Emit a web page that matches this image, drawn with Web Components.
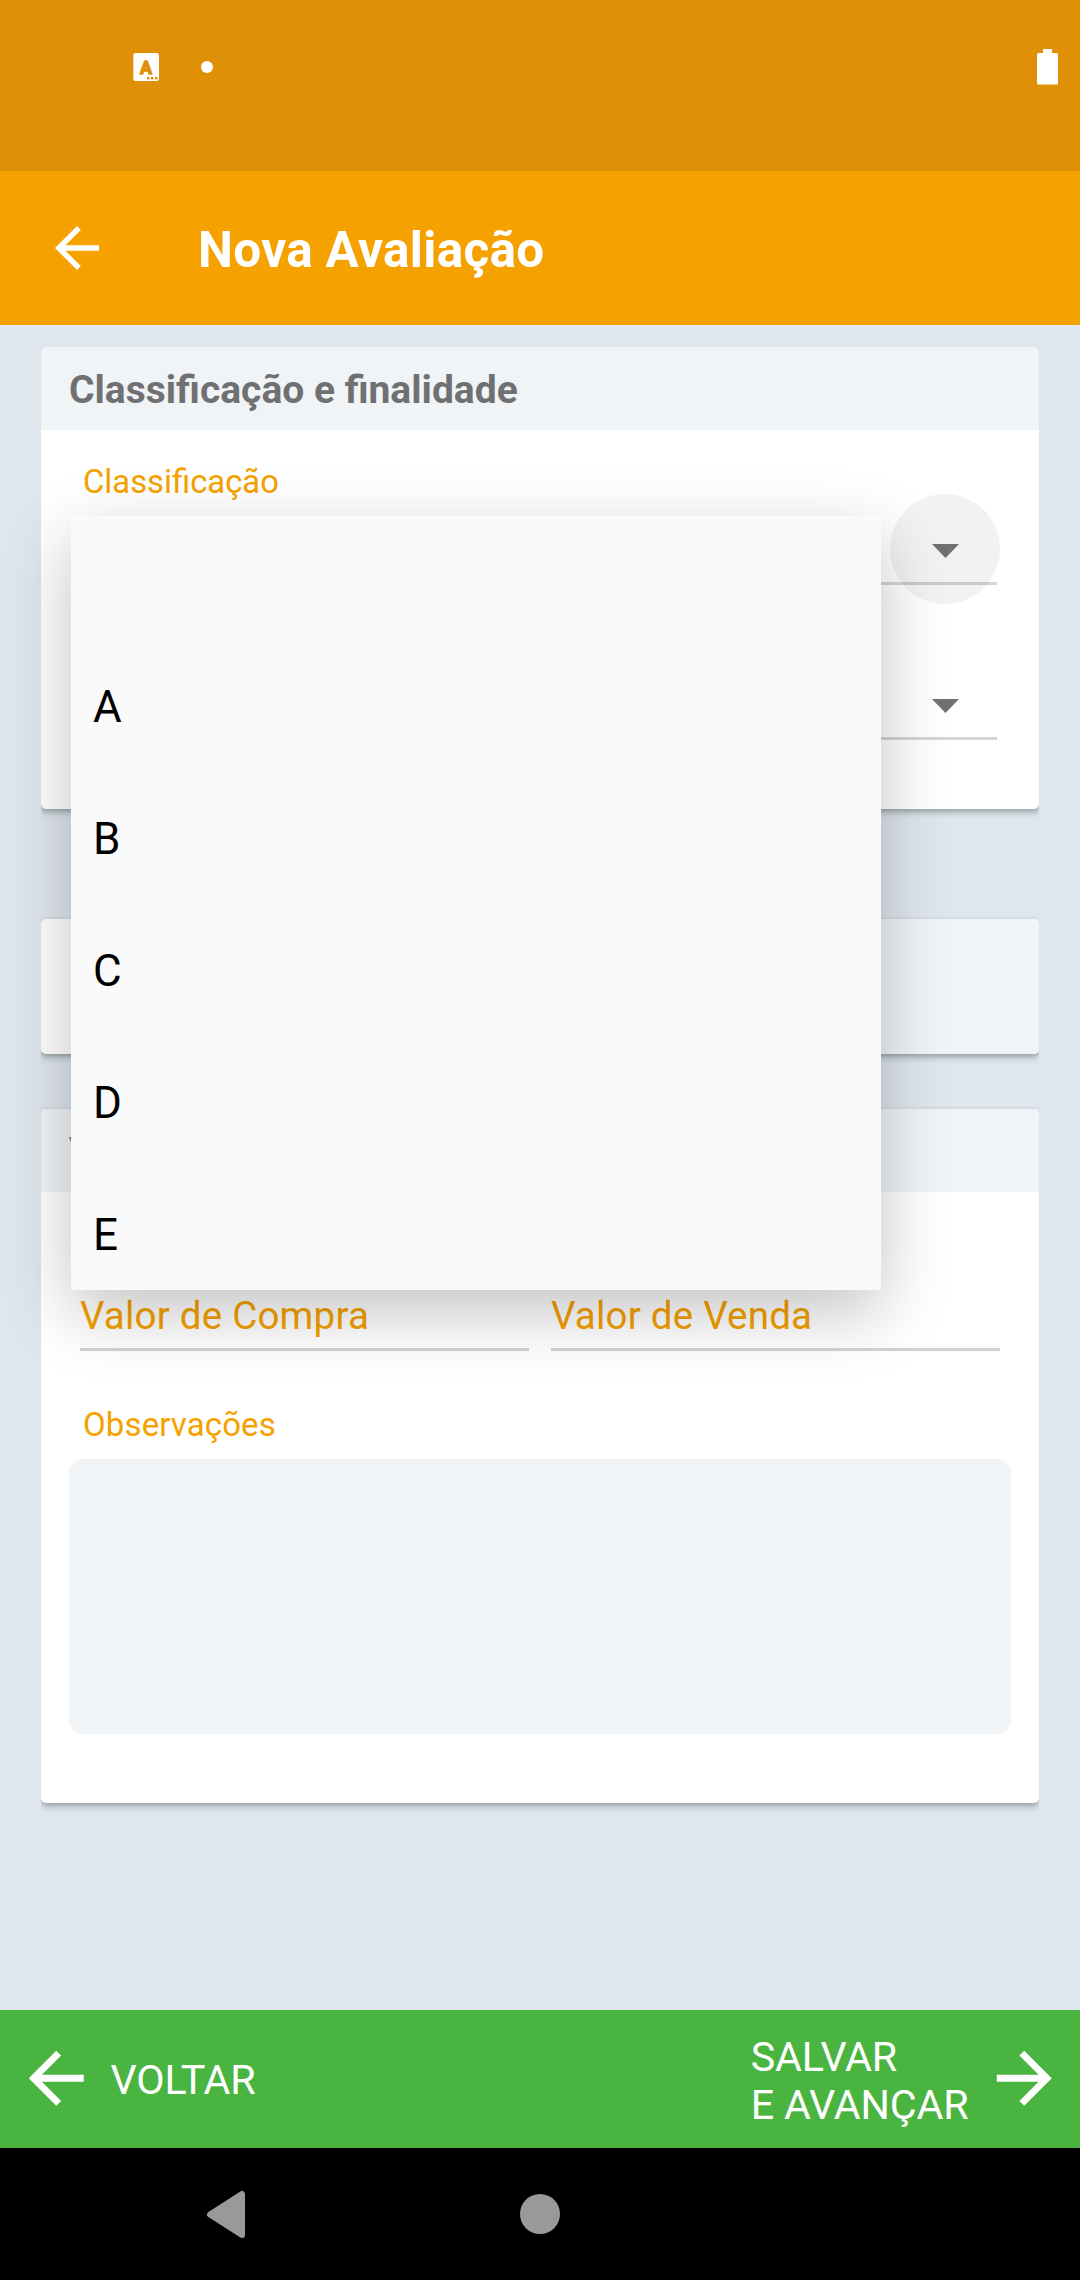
<!DOCTYPE html>
<html lang="pt-BR">
<head>
<meta charset="utf-8">
<title>Nova Avaliação</title>
<style>
html,body{margin:0;padding:0;background:#dfe6ed}
body{width:1080px;height:2280px;overflow:hidden;font-family:Roboto,"Liberation Sans",sans-serif}
</style>
</head>
<body>
<evaluation-screen></evaluation-screen>
<script>
const define = (name, html) => {
  const template = document.createElement('template');
  template.innerHTML = html;
  customElements.define(name, class extends HTMLElement {
    constructor() {
      super();
      this.attachShadow({ mode: 'open' }).append(template.content.cloneNode(true));
    }
  });
};

define('status-bar', `
<style>
:host{display:flex;align-items:flex-start;justify-content:space-between;height:171px;box-sizing:border-box;padding:49px 22px 0 133px;background:#df9007}
.left{display:flex;align-items:center;gap:42px;padding-top:4px}
svg{display:block}
.dot{width:12px;height:12px;border-radius:50%;background:#fff}
</style>
<div class="left">
  <svg width="26" height="28" viewBox="0 0 26 28"><rect x=".3" width="25.700" height="28" rx="2.500" fill="#fff"/>
    <text x="13" y="20.600" text-anchor="middle" textLength="12" lengthAdjust="spacingAndGlyphs" font-family="Roboto,sans-serif" font-size="18.500" font-weight="700" fill="#df9007" stroke="#df9007" stroke-width="1.300" stroke-linejoin="round">A</text>
    <g fill="#df9007"><rect x="14" y="24" width="2.400" height="2.400"/><rect x="18" y="24" width="2.400" height="2.400"/><rect x="22" y="24" width="2.400" height="2.400"/></g></svg>
  <div class="dot"></div>
</div>
<svg width="21" height="36" viewBox="0 0 21 36" fill="#fff"><path d="M6 0h9v4h4.500q1.500 0 1.500 1.500v28.500q0 1.500-1.500 1.500h-18q-1.500 0-1.500-1.500v-28.500q0-1.500 1.500-1.500h4.500z"/></svg>
`);

define('arrow-icon', `
<style>
:host{display:block;width:66px;height:66px;color:#fff}
:host([large]){width:82.5px;height:82.5px}
:host([forward]){transform:scaleX(-1)}
svg{display:block;width:100%;height:100%}
</style>
<svg viewBox="0 0 24 24" fill="currentColor"><path d="M20 11H7.830l5.590-5.590L12 4l-8 8 8 8 1.410-1.410L7.830 13H20v-2z"/></svg>
`);

define('app-bar', `
<style>
:host{display:flex;align-items:center;height:154px;box-sizing:border-box;padding-left:44px;background:#f5a100;color:#fff}
h1{margin:4px 0 0 88px;font-size:49.5px;line-height:60px;font-weight:700;white-space:nowrap;letter-spacing:.32px}
</style>
<arrow-icon></arrow-icon><h1><slot></slot></h1>
`);

define('form-card', `
<style>
:host{display:flex;flex-direction:column;box-sizing:border-box;background:#fff;border-radius:5px;
 box-shadow:0 3px 5px rgba(60,75,75,.34),0 3px 8px rgba(60,75,75,.14);clip-path:inset(-3px 0 -12px 0)}
:host([flat-top]){clip-path:inset(0 0 -12px 0)}
header{display:flex;align-items:center;height:83px;flex:none;box-sizing:border-box;padding:2px 0 0 28px;background:#f0f4f7;border-radius:5px 5px 0 0;
 color:#707072;font-size:39px;font-weight:700}
</style>
<header><slot name="title"></slot></header><slot></slot>
`);

define('plain-card', `
<style>
:host{display:flex;box-sizing:border-box;background:#fff;border-radius:5px;
 box-shadow:0 3px 5px rgba(60,75,75,.34),0 3px 8px rgba(60,75,75,.14);clip-path:inset(-3px 0 -12px 0)}
div{flex:1;margin-left:499px;background:#f0f4f7;border-radius:0 5px 5px 0}
</style><div></div>
`);

define('select-field', `
<style>
:host{display:flex;justify-content:flex-end;height:155px;box-sizing:border-box}
.row{display:flex;justify-content:flex-end;align-items:flex-start;width:913px;height:94px;border-bottom:3px solid #d5d5d5;box-sizing:border-box}
.knob{display:flex;align-items:center;justify-content:center;width:110px;height:110px;flex:none;border-radius:50%;margin:3px -3px 0 0}
:host([pressed]) .knob{background:rgba(0,0,0,.05)}
svg{display:block;margin-top:3px}
</style>
<div class="row"><div class="knob"><svg width="27" height="14" viewBox="0 0 27 14"><path d="M0 0h27L13.500 14z" fill="#717171"/></svg></div></div>
`);

define('field-label', `
<style>
:host{display:block;color:#f5a100;font-size:33px;line-height:40px;white-space:nowrap}
</style><slot></slot>
`);

define('money-field', `
<style>
:host{display:block;flex:1;box-sizing:border-box;height:58px;border-bottom:3px solid #d2d2d2;color:#f5a100;font-size:38.5px;line-height:46px;white-space:nowrap;letter-spacing:.22px}
</style><slot></slot>
`);

define('note-box', `<style>:host{display:block;height:275px;border-radius:14px;background:#f0f4f7}</style>`);

define('option-item', `
<style>:host{display:block;height:132px;flex:none;padding-left:22px;font-size:44px;line-height:132px;color:#000}</style><slot></slot>
`);

define('option-popup', `
<style>
:host{display:block;position:absolute;left:71px;top:516px;width:810px;height:774px;background:#fafafa;box-shadow:0 22px 64px rgba(0,0,0,.24)}
.clip{height:100%;overflow:hidden}
.list{display:flex;flex-direction:column;margin-top:-7px}
</style>
<div class="clip"><div class="list"><slot></slot></div></div>
`);

define('action-bar', `
<style>
:host{display:flex;justify-content:space-between;align-items:center;height:138px;background:#49b43f;color:#fff;font-size:41.25px;line-height:48px;padding:0 15px 0 14.5px}
.side{display:flex;align-items:center}
arrow-icon{margin-top:-1px}
.back{gap:13.5px}.next{gap:14px}
.back span{padding-top:1px;letter-spacing:-.25px}.next span{padding-top:4px;letter-spacing:-.15px}
span{white-space:nowrap}
</style>
<div class="side back"><arrow-icon large></arrow-icon><span>VOLTAR</span></div>
<div class="side next"><span>SALVAR<br>E AVANÇAR</span><arrow-icon large forward></arrow-icon></div>
`);

define('system-nav', `
<style>
:host{display:grid;grid-template-columns:1fr 180px 1fr;align-items:center;justify-items:center;height:132px;background:#000}
svg{display:block}
.tri{margin-left:2px}
</style>
<svg class="tri" width="40" height="48" viewBox="0 0 40 48"><path d="M4 24.500L36 4V45z" fill="#999" stroke="#999" stroke-width="6" stroke-linejoin="round"/></svg>
<svg width="40" height="40" viewBox="0 0 40 40"><circle cx="20" cy="20" r="20" fill="#999"/></svg>
`);

define('evaluation-screen', `
<style>
:host{display:flex;flex-direction:column;position:relative;width:1080px;height:2280px;overflow:hidden;background:#dfe6ed}
main{display:flex;flex-direction:column;flex:1;padding:22px 41px 0}
.c1{height:462px}.c2{height:135px;margin-top:110px}.c3{height:694px;margin-top:55px}
.c1 field-label{margin:32px 0 0 42px;font-size:32.8px}
.c1 .first{margin-top:-11px}
select-field{margin-right:42px}
.money{display:flex;gap:22px;margin:101px 39px 0}
.c3 field-label{margin:54px 0 0 42px;letter-spacing:.12px}
note-box{margin:14px 28px 0}
</style>
<status-bar></status-bar>
<app-bar>Nova Avaliação</app-bar>
<main>
  <form-card class="c1" flat-top><span slot="title">Classificação e finalidade</span>
    <field-label>Classificação</field-label>
    <select-field class="first" pressed></select-field>
    <select-field></select-field>
  </form-card>
  <plain-card class="c2"></plain-card>
  <form-card class="c3"><span slot="title">Valores</span>
    <div class="money"><money-field>Valor de Compra</money-field><money-field>Valor de Venda</money-field></div>
    <field-label>Observações</field-label>
    <note-box></note-box>
  </form-card>
</main>
<action-bar></action-bar>
<system-nav></system-nav>
<option-popup>
  <option-item></option-item><option-item>A</option-item><option-item>B</option-item>
  <option-item>C</option-item><option-item>D</option-item><option-item>E</option-item>
</option-popup>
`);
</script>
</body>
</html>
